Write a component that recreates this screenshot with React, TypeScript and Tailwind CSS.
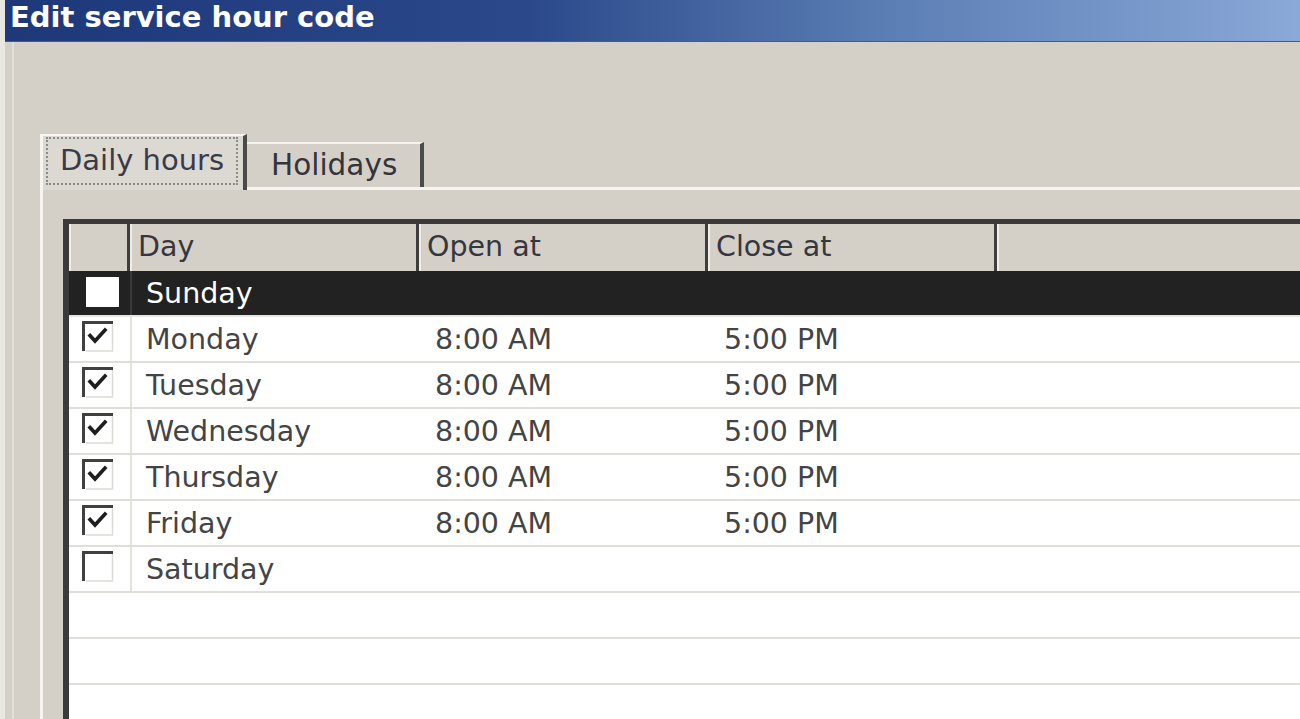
import React from 'react';

type Day = { name: string; checked: boolean; open?: string; close?: string };

const days: Day[] = [
  { name: 'Sunday', checked: false },
  { name: 'Monday', checked: true, open: '8:00 AM', close: '5:00 PM' },
  { name: 'Tuesday', checked: true, open: '8:00 AM', close: '5:00 PM' },
  { name: 'Wednesday', checked: true, open: '8:00 AM', close: '5:00 PM' },
  { name: 'Thursday', checked: true, open: '8:00 AM', close: '5:00 PM' },
  { name: 'Friday', checked: true, open: '8:00 AM', close: '5:00 PM' },
  { name: 'Saturday', checked: false },
];

function CheckBox({ checked }: { checked: boolean }) {
  return (
    <svg width="32" height="31" viewBox="0 0 32 31" className="block">
      <rect x="0" y="0" width="32" height="31" fill="#fff" />
      <path d="M1.5 30V1.5H31" fill="none" stroke="#404040" strokeWidth="3" />
      <path d="M30.5 3V30H4" fill="none" stroke="#dcdad4" strokeWidth="1.5" />
      {checked && (
        <path d="M8 14.5L13 20L23 9" fill="none" stroke="#1e1e1e" strokeWidth="3.6" strokeLinecap="square" />
      )}
    </svg>
  );
}

function HeaderCell({ label, w }: { label?: string; w: string }) {
  return (
    <div className={`${w} h-full flex items-center pl-[6px] border-l-2 border-l-[#f0eee8] border-r-[3px] border-r-[#3e3e3e] text-[#363640]`}>
      {label}
    </div>
  );
}

export default function App() {
  return (
    <div className="w-[1300px] h-[719px] overflow-hidden flex bg-[#d4d0c8] font-['DejaVu_Sans',sans-serif]">
      <div className="w-[5px] shrink-0 bg-[#e9e7e2]" />
      <div className="flex-1 flex flex-col min-w-0">
        {/* title bar */}
        <div className="h-[42px] shrink-0 border-b border-[#4a5a78] bg-[linear-gradient(90deg,#1e387a_0%,#2a488a_40%,#5b7eb4_68%,#8aa8d8_100%)] pl-[5px]">
          <span className="text-[29px] leading-[34px] font-bold text-white">Edit service hour code</span>
        </div>

        {/* body */}
        <div className="flex-1 flex min-h-0">
          <div className="w-[7px] shrink-0" />
          <div className="w-[2px] shrink-0 bg-[#e2dfd8]" />
          <div className="flex-1 flex flex-col pl-[26px] pt-[92px] min-w-0">
            {/* tabs */}
            <div className="flex items-end h-[53px] shrink-0 relative z-10">
              <div className="w-[207px] h-[56px] mb-[-3px] bg-[#dcd9d2] border-t-2 border-l-[3px] border-[#f6f5f1] border-r-[4px] border-r-[#4a4a4a] pt-[1px] pl-[3px] pr-[5px]">
                <div className="h-[48px] border-2 border-dotted border-[#8a8a86] flex items-center pl-[12px] text-[29px] text-[#3a3a48]">
                  Daily hours
                </div>
              </div>
              <div className="w-[177px] h-[45px] bg-[#d4d0c8] border-t-2 border-[#f4f3ef] border-r-[4px] border-r-[#4a4a4a] flex items-center pl-[24px] text-[29.5px] text-[#34343a]">
                Holidays
              </div>
            </div>

            {/* panel */}
            <div className="flex-1 border-t-[3px] border-l-[3px] border-[#f6f5f1] pl-[20px] pt-[29px] min-h-0">
              <div className="h-full bg-white border-t-[5px] border-l-[6px] border-[#3a3a3a] overflow-hidden text-[28.5px]">
                {/* header */}
                <div className="h-[47px] flex bg-[#d4d0c8]">
                  <HeaderCell w="w-[61px]" />
                  <HeaderCell w="w-[289px]" label="Day" />
                  <HeaderCell w="w-[289px]" label="Open at" />
                  <HeaderCell w="w-[289px]" label="Close at" />
                  <div className="flex-1 border-l-2 border-[#f0eee8]" />
                </div>

                {/* rows */}
                {days.map((d, i) => {
                  const selected = i === 0;
                  return (
                    <div
                      key={d.name}
                      className={`h-[46px] flex border-b-2 ${selected ? 'bg-[#222222] border-[#e8e6e1] text-white' : 'bg-white border-[#e0ded8] text-[#444444]'}`}
                    >
                      <div className={`w-[63px] shrink-0 flex items-start pl-[13px] pt-[4px] border-r-2 ${selected ? 'border-[#3a3a3a]' : 'border-[#e4e2dc]'}`}>
                        {selected ? <div className="w-[33px] h-[30px] bg-white mt-[2px] ml-[4px]" /> : <CheckBox checked={d.checked} />}
                      </div>
                      <div className="w-[287px] shrink-0 flex items-center pl-[14px] pt-[3px]">{d.name}</div>
                      <div className="w-[289px] shrink-0 flex items-center pl-[16px] pt-[3px]">{d.open}</div>
                      <div className="w-[289px] shrink-0 flex items-center pl-[16px] pt-[3px]">{d.close}</div>
                      <div className="flex-1" />
                    </div>
                  );
                })}
                {[0, 1, 2].map((n) => (
                  <div key={n} className="h-[46px] border-b-2 border-[#e0ded8]" />
                ))}
              </div>
            </div>
          </div>
        </div>
      </div>
    </div>
  );
}
